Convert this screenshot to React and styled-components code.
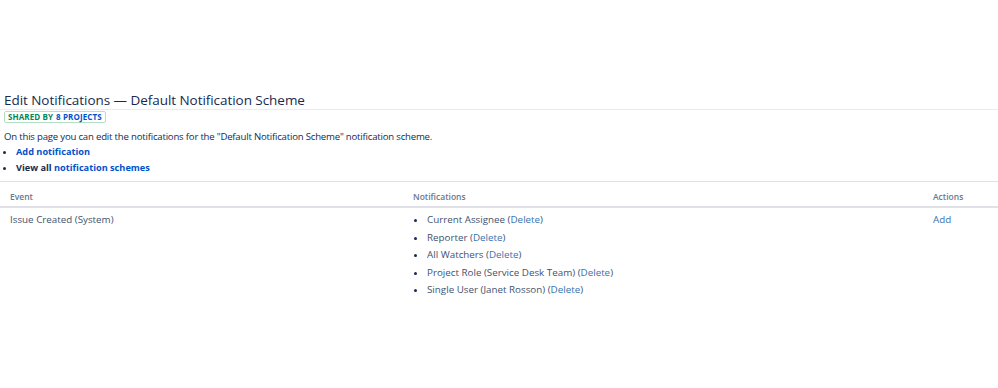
import React from 'react';
import styled, { createGlobalStyle } from 'styled-components';

const Global = createGlobalStyle`
  body {
    margin: 0;
    background: #fff;
    font-family: "Open Sans", "Noto Sans", sans-serif;
    color: #172b4d;
  }
`;

const Page = styled.div`
  padding-top: 91px;
`;

const Header = styled.div`
  padding: 0 4px;
  border-bottom: 1px solid #ebecf0;
`;

const Title = styled.h1`
  margin: 0;
  font-size: 13.5px;
  font-weight: 400;
  line-height: 18px;
  color: #172b4d;
  letter-spacing: -0.05px;
`;

const Lozenge = styled.div`
  display: flex;
  gap: 3px;
  width: fit-content;
  margin: 1px 0 0 4px;
  padding: 0 3px;
  border: 1px solid #b3dfc4;
  border-radius: 2px;
  font-size: 8px;
  font-weight: 700;
  line-height: 10px;
  letter-spacing: 0.1px;
`;

const LozPart = styled.span`
  color: ${p => (p.$blue ? '#0052cc' : '#00875a')};
`;

const Intro = styled.div`
  padding: 7px 4px 0;
  font-size: 9.6px;
  line-height: 14px;
  letter-spacing: -0.2px;
  color: #172b4d;
`;

const Links = styled.ul`
  margin: 0;
  padding: 0 0 5px 16px;
  font-size: 9.2px;
  font-weight: 700;
  line-height: 16px;
  border-bottom: 1px solid #dfe1e6;
`;

const Link = styled.a`
  color: ${p => (p.$bold ? '#0052cc' : '#3572b0')};
  font-weight: ${p => (p.$bold ? 700 : 400)};
  text-decoration: none;
`;

const Table = styled.div`
  display: grid;
  grid-template-columns: 405px 520px 1fr;
`;

const Th = styled.div`
  padding: 9px 8px 3px ${p => p.$pad || 10}px;
  font-size: 8.5px;
  font-weight: 600;
  color: #6b778c;
  line-height: 12px;
  border-bottom: 2px solid #dfe1e6;
`;

const Td = styled.div`
  padding: 3px 8px 0 ${p => p.$pad || 10}px;
  font-size: 9.8px;
  line-height: 17.5px;
  color: #42526e;
`;

const Bullets = styled.ul`
  margin: 0;
  padding: 0 0 0 14px;

  li::marker {
    color: #172b4d;
  }
`;

const notifications = [
  'Current Assignee',
  'Reporter',
  'All Watchers',
  'Project Role (Service Desk Team)',
  'Single User (Janet Rosson)',
];

export default function App() {
  return (
    <Page>
      <Global />
      <Header>
        <Title>Edit Notifications — Default Notification Scheme</Title>
      </Header>
      <Lozenge>
        <LozPart>SHARED BY</LozPart>
        <LozPart $blue>8 PROJECTS</LozPart>
      </Lozenge>
      <Intro>
        On this page you can edit the notifications for the "Default Notification Scheme" notification scheme.
      </Intro>
      <Links>
        <li><Link $bold href="#">Add notification</Link></li>
        <li>View all <Link $bold href="#">notification schemes</Link></li>
      </Links>
      <Table>
        <Th>Event</Th>
        <Th $pad={8}>Notifications</Th>
        <Th $pad={8}>Actions</Th>
        <Td>Issue Created (System)</Td>
        <Td $pad={8}>
          <Bullets>
            {notifications.map(n => (
              <li key={n}>
                {n} (<Link href="#">Delete</Link>)
              </li>
            ))}
          </Bullets>
        </Td>
        <Td $pad={8}>
          <Link href="#">Add</Link>
        </Td>
      </Table>
    </Page>
  );
}
